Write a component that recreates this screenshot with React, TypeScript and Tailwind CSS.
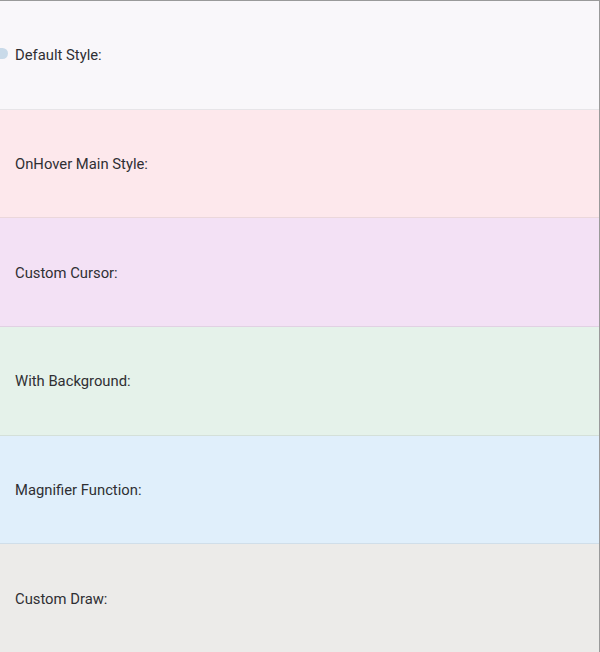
import React from "react";

const sections = [
  { label: "Default Style:", bg: "bg-[#f9f7fa]" },
  { label: "OnHover Main Style:", bg: "bg-[#fde8ec]" },
  { label: "Custom Cursor:", bg: "bg-[#f3e1f5]" },
  { label: "With Background:", bg: "bg-[#e5f2ea]" },
  { label: "Magnifier Function:", bg: "bg-[#e0effb]" },
  { label: "Custom Draw:", bg: "bg-[#ecebe9]" },
];

export default function App() {
  return (
    <div
      className="w-[600px] h-[652px] flex flex-col border-t border-r border-[#9a9a9a] overflow-hidden relative"
      style={{ fontFamily: "Roboto, 'Liberation Sans', sans-serif" }}
    >
      {sections.map((s, i) => (
        <div
          key={i}
          className={`flex-1 flex items-center pl-[15px] pt-[1px] text-[14.8px] text-[#2f2f33] ${s.bg} ${
            i < sections.length - 1 ? "border-b border-[rgba(0,0,0,0.07)]" : ""
          }`}
        >
          {s.label}
        </div>
      ))}
      <div className="absolute left-[-5px] top-[47px] w-[13px] h-[11px] rounded-full bg-[#c9dae9]" />
    </div>
  );
}
